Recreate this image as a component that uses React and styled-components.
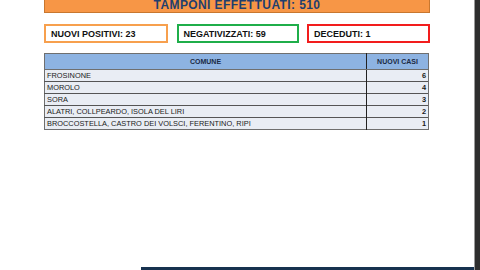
import styled, { createGlobalStyle } from 'styled-components';

const Global = createGlobalStyle`
  html, body { margin: 0; padding: 0; background: #fff; }
  body { font-family: "Liberation Sans", Arial, sans-serif; }
`;

const Screen = styled.div`
  width: 480px;
  height: 270px;
  display: grid;
  grid-template-columns: 1fr 6px;
  grid-template-rows: 1fr 3px;
  overflow: hidden;
`;

const Sheet = styled.div`
  background: #fff;
  padding-left: 44px;
  display: flex;
  flex-direction: column;
`;

const Edge = styled.div`
  grid-row: 1 / 3;
  grid-column: 2;
  background: #2e2e2e;
  border-left: 1px solid #9a9a9a;
`;

const Footer = styled.div`
  margin-left: 141px;
  background: #17324f;
`;

const Content = styled.div`
  width: 386px;
  display: flex;
  flex-direction: column;
`;

const Banner = styled.div`
  height: 12px;
  background: #f79646;
  border: 1px solid #c8772f;
  border-top: none;
  display: flex;
  align-items: flex-start;
  justify-content: center;
`;

const BannerText = styled.span`
  font-size: 12px;
  line-height: 11px;
  font-weight: 700;
  color: #1f3f6e;
  letter-spacing: 0.4px;
`;

const Stats = styled.div`
  margin-top: 11px;
  display: grid;
  grid-template-columns: 124px 122px 123px;
  justify-content: space-between;
`;

const Stat = styled.div`
  height: 15px;
  border: 2px solid ${p => p.$color};
  padding-left: 5px;
  display: flex;
  align-items: center;
  font-size: 9px;
  font-weight: 700;
  color: #111;
`;

const Table = styled.table`
  margin-top: 10px;
  width: 385px;
  border-collapse: collapse;
  font-size: 7.4px;
  color: #1a1a1a;
  border: 1px solid #6f6f6f;
`;

const Head = styled.th`
  height: 15px;
  padding: 0;
  background: #8db3e2;
  font-weight: 700;
  font-size: 7px;
  color: #1b2a44;
  text-align: center;
  border: 1px solid #6f6f6f;
  border-right: ${p => (p.$first ? '1px solid #222' : '1px solid #6f6f6f')};
`;

const Cell = styled.td`
  height: 11px;
  padding: 0 2px;
  background: #e9edf4;
  border-top: 1px solid #555;
  border-right: ${p => (p.$first ? '1px solid #222' : '1px solid #6f6f6f')};
  text-align: ${p => (p.$num ? 'right' : 'left')};
  font-weight: ${p => (p.$num ? 700 : 400)};
  line-height: 11px;
  white-space: nowrap;
`;

const rows = [
  ['FROSINONE', 6],
  ['MOROLO', 4],
  ['SORA', 3],
  ['ALATRI, COLLPEARDO, ISOLA DEL LIRI', 2],
  ['BROCCOSTELLA, CASTRO DEI VOLSCI, FERENTINO, RIPI', 1],
];

export default function App() {
  return (
    <Screen>
      <Global />
      <Sheet>
        <Content>
          <Banner>
            <BannerText>TAMPONI EFFETTUATI: 510</BannerText>
          </Banner>
          <Stats>
            <Stat $color="#f7a04e">NUOVI POSITIVI: 23</Stat>
            <Stat $color="#1fae4a">NEGATIVIZZATI: 59</Stat>
            <Stat $color="#f21d1d">DECEDUTI: 1</Stat>
          </Stats>
          <Table>
            <thead>
              <tr>
                <Head $first style={{ width: 321 }}>COMUNE</Head>
                <Head>NUOVI CASI</Head>
              </tr>
            </thead>
            <tbody>
              {rows.map(([name, n]) => (
                <tr key={name}>
                  <Cell $first>{name}</Cell>
                  <Cell $num>{n}</Cell>
                </tr>
              ))}
            </tbody>
          </Table>
        </Content>
      </Sheet>
      <Edge />
      <Footer />
    </Screen>
  );
}
